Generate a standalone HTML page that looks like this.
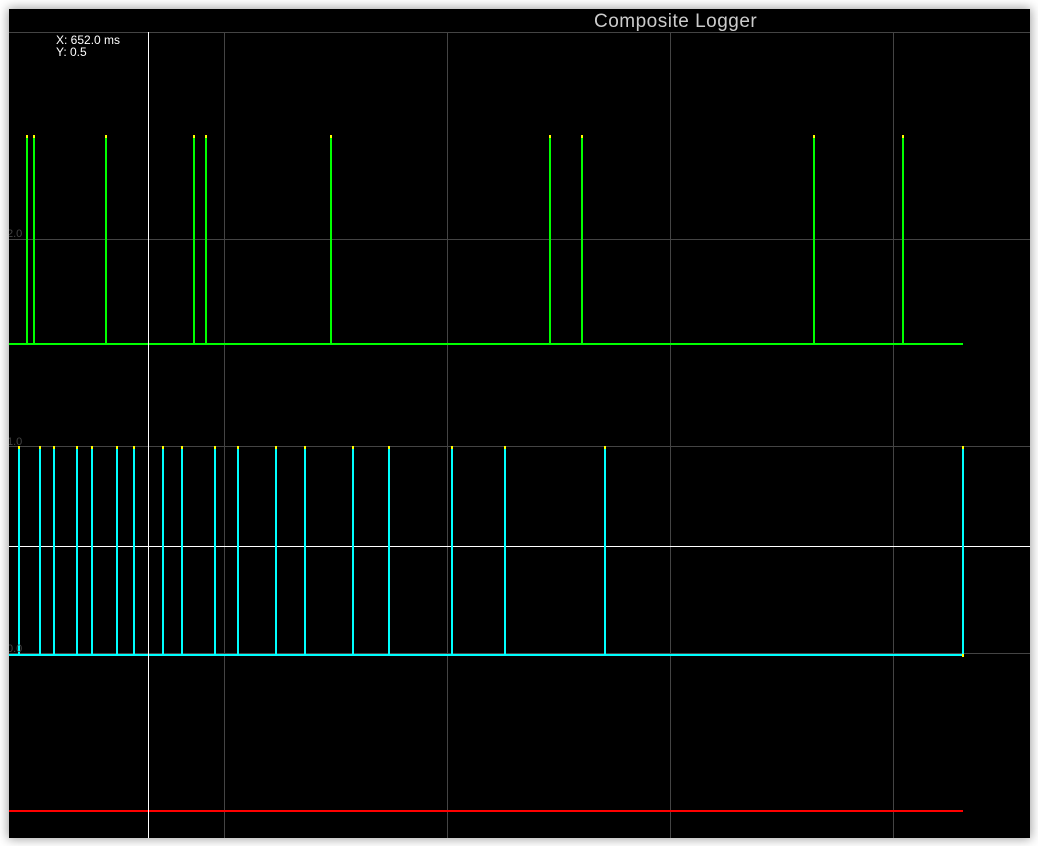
<!DOCTYPE html>
<html>
<head>
<meta charset="utf-8">
<title>Composite Logger</title>
<style>
html,body{margin:0;padding:0;background:#fff;width:1038px;height:846px;overflow:hidden}
#p{position:absolute;left:9px;top:9px;width:1021px;height:829px;background:#000;box-shadow:0 0 10px 1px rgba(0,0,0,.38);overflow:hidden}
#s{position:absolute;left:0;top:0}
.t{position:absolute;font-family:"Liberation Sans",sans-serif;white-space:nowrap;line-height:1}
</style>
</head>
<body>
<div id="p">
<svg id="s" width="1021" height="829" viewBox="9 9 1021 829" shape-rendering="crispEdges">
<g fill="#444">
<rect x="9" y="32" width="1021" height="1"/>
<rect x="9" y="239" width="1021" height="1"/>
<rect x="9" y="446" width="1021" height="1"/>
<rect x="9" y="653" width="1021" height="1"/>
<rect x="224" y="32" width="1" height="806"/>
<rect x="447" y="32" width="1" height="806"/>
<rect x="670" y="32" width="1" height="806"/>
<rect x="893" y="32" width="1" height="806"/>
</g>
<rect x="9" y="546" width="1021" height="1" fill="#fff"/>
<g fill="#0f0">
<rect x="9" y="343" width="954" height="2"/>
<rect x="26" y="135" width="2" height="208"/>
<rect x="33" y="135" width="2" height="208"/>
<rect x="105" y="135" width="2" height="208"/>
<rect x="193" y="135" width="2" height="208"/>
<rect x="205" y="135" width="2" height="208"/>
<rect x="330" y="135" width="2" height="208"/>
<rect x="549" y="135" width="2" height="208"/>
<rect x="581" y="135" width="2" height="208"/>
<rect x="813" y="135" width="2" height="208"/>
<rect x="902" y="135" width="2" height="208"/>
</g>
<g fill="#ff0">
<rect x="26" y="135" width="2" height="3"/>
<rect x="33" y="135" width="2" height="3"/>
<rect x="105" y="135" width="2" height="3"/>
<rect x="193" y="135" width="2" height="3"/>
<rect x="205" y="135" width="2" height="3"/>
<rect x="330" y="135" width="2" height="3"/>
<rect x="549" y="135" width="2" height="3"/>
<rect x="581" y="135" width="2" height="3"/>
<rect x="813" y="135" width="2" height="3"/>
<rect x="902" y="135" width="2" height="3"/>
</g>
<g fill="#0ff">
<rect x="9" y="654" width="954" height="2"/>
<rect x="18" y="446" width="2" height="208"/>
<rect x="39" y="446" width="2" height="208"/>
<rect x="53" y="446" width="2" height="208"/>
<rect x="76" y="446" width="2" height="208"/>
<rect x="91" y="446" width="2" height="208"/>
<rect x="116" y="446" width="2" height="208"/>
<rect x="133" y="446" width="2" height="208"/>
<rect x="162" y="446" width="2" height="208"/>
<rect x="181" y="446" width="2" height="208"/>
<rect x="214" y="446" width="2" height="208"/>
<rect x="237" y="446" width="2" height="208"/>
<rect x="275" y="446" width="2" height="208"/>
<rect x="304" y="446" width="2" height="208"/>
<rect x="352" y="446" width="2" height="208"/>
<rect x="388" y="446" width="2" height="208"/>
<rect x="451" y="446" width="2" height="208"/>
<rect x="504" y="446" width="2" height="208"/>
<rect x="604" y="446" width="2" height="208"/>
<rect x="962" y="446" width="2" height="208"/>
</g>
<g fill="#ff0">
<rect x="18" y="446" width="2" height="3"/>
<rect x="39" y="446" width="2" height="3"/>
<rect x="53" y="446" width="2" height="3"/>
<rect x="76" y="446" width="2" height="3"/>
<rect x="91" y="446" width="2" height="3"/>
<rect x="116" y="446" width="2" height="3"/>
<rect x="133" y="446" width="2" height="3"/>
<rect x="162" y="446" width="2" height="3"/>
<rect x="181" y="446" width="2" height="3"/>
<rect x="214" y="446" width="2" height="3"/>
<rect x="237" y="446" width="2" height="3"/>
<rect x="275" y="446" width="2" height="3"/>
<rect x="304" y="446" width="2" height="3"/>
<rect x="352" y="446" width="2" height="3"/>
<rect x="388" y="446" width="2" height="3"/>
<rect x="451" y="446" width="2" height="3"/>
<rect x="504" y="446" width="2" height="3"/>
<rect x="604" y="446" width="2" height="3"/>
<rect x="962" y="446" width="2" height="3"/>
<rect x="962" y="654" width="2" height="3"/>
</g>
<rect x="9" y="810" width="954" height="2" fill="#f00"/>
<rect x="148" y="32" width="1" height="806" fill="#fff"/>
</svg>
<div class="t" style="left:585px;top:3px;font-size:19px;letter-spacing:.5px;color:#ccc">Composite Logger</div>
<div class="t" style="left:47px;top:25px;font-size:12px;color:#fff">X: 652.0 ms</div>
<div class="t" style="left:47px;top:37px;font-size:12px;color:#fff">Y: 0.5</div>
<div class="t" style="left:-2px;top:220px;font-size:11px;color:#444">2.0</div>
<div class="t" style="left:-2px;top:428px;font-size:11px;color:#444">1.0</div>
<div class="t" style="left:-2px;top:635px;font-size:11px;color:#444">0.0</div>
</div>
</body>
</html>
